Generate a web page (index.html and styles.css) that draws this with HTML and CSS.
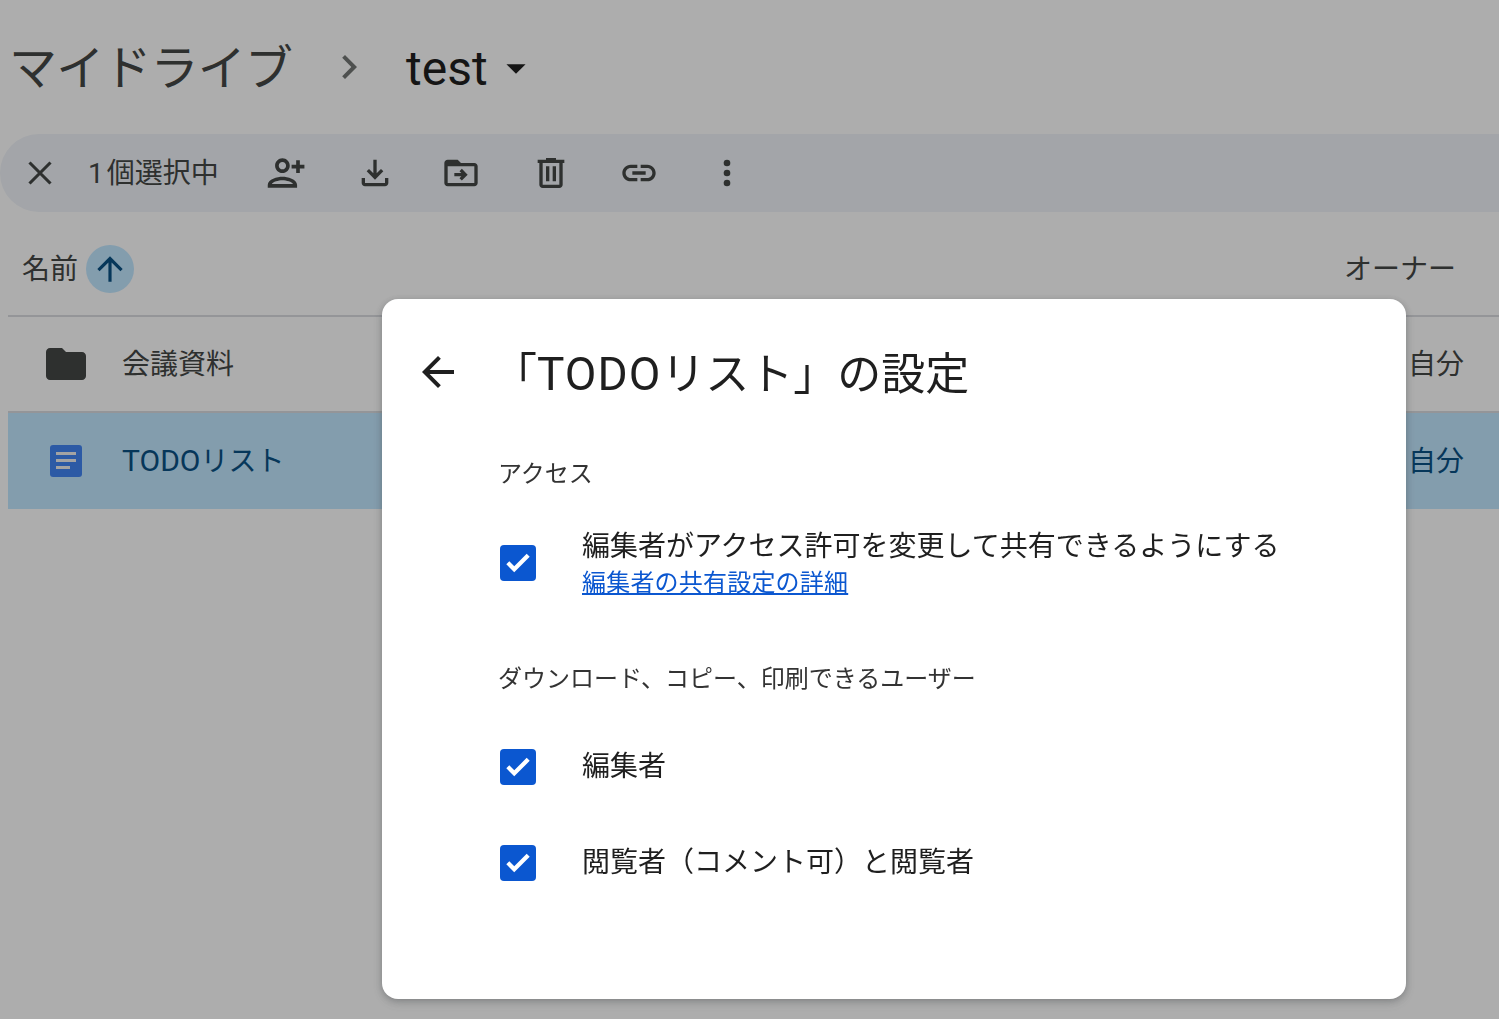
FILE: index.html
```html
<!DOCTYPE html>
<html lang="ja">
<head>
  <meta charset="UTF-8" />
  <meta name="viewport" content="width=device-width, initial-scale=1" />
  <title>TODOリストの設定</title>
  <link rel="stylesheet" href="styles.css">
</head>
<body>
  <div class="page">
    <header class="breadcrumb">
      <span class="crumb-root">マイドライブ</span>
      <svg class="crumb-sep" viewBox="0 0 24 24"><path d="M10 6L8.59 7.41 13.17 12l-4.58 4.59L10 18l6-6z"/></svg>
      <span class="crumb-current">test</span>
      <svg class="crumb-drop" viewBox="0 0 24 24"><path d="M7 10l5 5 5-5z"/></svg>
    </header>

    <div class="toolbar">
      <svg class="close-icon" viewBox="0 0 24 24"><path d="M6 6l12 12M18 6L6 18"/></svg>
      <span class="selected-count">1 個選択中</span>
      <div class="actions">
        <svg class="action action-share" viewBox="0 0 24 24"><path d="M9.500 12c2.200 0 4-1.800 4-4s-1.800-4-4-4-4 1.800-4 4 1.800 4 4 4zm0-6c1.100 0 2 .9 2 2s-.9 2-2 2-2-.9-2-2 .9-2 2-2zm0 8c-2.700 0-8 1.300-8 4.500V20h16v-1.500c0-3.200-5.300-4.500-8-4.500zm-5.800 4c.6-1.100 3.600-2 5.800-2s5.200.9 5.800 2H3.700zM19 12V9.500h2.500v-2H19V5h-2v2.500h-2.500v2H17V12z"/></svg>
        <svg class="action" viewBox="0 0 24 24"><path d="M18 15v3H6v-3H4v3c0 1.100.9 2 2 2h12c1.100 0 2-.9 2-2v-3h-2zm-1-4l-1.410-1.410L13 12.170V4h-2v8.170L8.410 9.590 7 11l5 5 5-5z"/></svg>
        <svg class="action action-move" viewBox="0 0 24 24"><path d="M20 6h-8l-2-2H4c-1.100 0-2 .9-2 2v12c0 1.100.9 2 2 2h16c1.100 0 2-.9 2-2V8c0-1.100-.9-2-2-2zm0 12H4V8h16v10z"/><path d="M12.500 9.500l-1.400 1.400 1.100 1.100H8v2h4.200l-1.100 1.100 1.400 1.400 3.500-3.500z"/></svg>
        <svg class="action" viewBox="0 0 24 24"><path d="M15 4V3H9v1H4v2h1v13c0 1.100.9 2 2 2h10c1.100 0 2-.9 2-2V6h1V4h-5zm2 15H7V6h10v13zM9 8h2v9H9zm4 0h2v9h-2z"/></svg>
        <svg class="action" viewBox="0 0 24 24"><path d="M17 7h-4v2h4c1.650 0 3 1.350 3 3s-1.350 3-3 3h-4v2h4c2.760 0 5-2.240 5-5s-2.240-5-5-5zm-6 8H7c-1.650 0-3-1.350-3-3s1.350-3 3-3h4V7H7c-2.760 0-5 2.240-5 5s2.240 5 5 5h4v-2zm-3-4h8v2H8z"/></svg>
        <svg class="action" viewBox="0 0 24 24"><circle cx="12" cy="6" r="2"/><circle cx="12" cy="12" r="2"/><circle cx="12" cy="18" r="2"/></svg>
      </div>
    </div>

    <div class="file-table">
      <div class="table-head">
        <div class="sort-name">
          <span class="cell-text">名前</span>
          <span class="sort-btn">
            <svg viewBox="0 0 24 24"><path d="M4 12l1.410 1.410L11 7.830V20h2V7.830l5.580 5.590L20 12l-8-8-8 8z"/></svg>
          </span>
        </div>
        <span class="owner-head cell-text">オーナー</span>
      </div>

      <div class="file-row">
        <svg class="file-icon" viewBox="0 0 24 24"><path class="folder" d="M10 4H4c-1.100 0-2 .9-2 2v12c0 1.100.9 2 2 2h16c1.100 0 2-.9 2-2V8c0-1.100-.9-2-2-2h-8l-2-2z"/></svg>
        <span class="file-name cell-text">会議資料</span>
        <span class="cell-text">自分</span>
      </div>

      <div class="file-row selected">
        <svg class="file-icon" viewBox="0 0 24 24">
          <rect class="doc" x="4" y="4" width="16" height="16" rx="1.500"/>
          <path class="doc-lines" d="M7 7.500h10v1.500H7zM7 11h10v1.500H7zM7 14.500h7V16H7z"/>
        </svg>
        <span class="file-name cell-text"><span class="latin">TODO</span>リスト</span>
        <span class="cell-text">自分</span>
      </div>
    </div>
  </div>

  <div class="scrim"></div>

  <div class="dialog">
    <div class="dialog-head">
      <svg class="back-icon" viewBox="0 0 24 24"><path d="M20 11H7.830l5.590-5.590L12 4l-8 8 8 8 1.410-1.410L7.830 13H20v-2z"/></svg>
      <h1>「<span class="latin-lg">TODO</span>リスト」の設定</h1>
    </div>

    <div class="dialog-body">
      <h2 class="section-title">アクセス</h2>
      <div class="option option-first">
        <span class="checkbox"><svg viewBox="0 0 24 24"><path d="M9.500 18.200l-5.300-5.300 2-2 3.300 3.300 8.300-8.300 2 2z"/></svg></span>
        <div class="option-text">
          <div>編集者がアクセス許可を変更して共有できるようにする</div>
          <a href="#" class="learn-more">編集者の共有設定の詳細</a>
        </div>
      </div>

      <h2 class="section-title section-second">ダウンロード、コピー、印刷できるユーザー</h2>
      <div class="option">
        <span class="checkbox"><svg viewBox="0 0 24 24"><path d="M9.500 18.200l-5.300-5.300 2-2 3.300 3.300 8.300-8.300 2 2z"/></svg></span>
        <div class="option-text">編集者</div>
      </div>
      <div class="option">
        <span class="checkbox"><svg viewBox="0 0 24 24"><path d="M9.500 18.200l-5.300-5.300 2-2 3.300 3.300 8.300-8.300 2 2z"/></svg></span>
        <div class="option-text">閲覧者（コメント可）と閲覧者</div>
      </div>
    </div>
  </div>
</body>
</html>
```

FILE: styles.css
```css
* {
  box-sizing: border-box;
  font-family: Roboto, 'Noto Sans CJK JP', sans-serif;
}

html, body {
  height: 100%;
}

body {
  margin: 0;
  background: #fff;
  color: #1f1f1f;
  overflow: hidden;
}

.breadcrumb {
  display: flex;
  align-items: center;
  height: 134px;
  padding-left: 9px;
}

.crumb-root {
  width: 287px;
  padding-bottom: 6px;
  font-size: 48px;
  letter-spacing: -0.8px;
  color: #444746;
  white-space: nowrap;
}

.crumb-sep {
  width: 48px;
  height: 48px;
  margin-left: 29px;
  fill: #747775;
}

.crumb-current {
  margin-left: 33px;
  padding-top: 2px;
  font-size: 48px;
  color: #1f1f1f;
}

.crumb-drop {
  width: 48px;
  height: 48px;
  margin-left: 4px;
  padding-top: 2px;
  fill: #1f1f1f;
}

.toolbar {
  display: flex;
  align-items: center;
  height: 78px;
  padding-left: 19px;
  background: #f0f4f9;
  border-radius: 39px 0 0 39px;
}

.close-icon {
  width: 42px;
  height: 42px;
  fill: none;
  stroke: #444746;
  stroke-width: 1.800;
}

.selected-count {
  margin-left: 27px;
  padding-bottom: 4px;
  font-size: 28px;
  word-spacing: -4px;
  color: #444746;
  white-space: nowrap;
}

.actions {
  display: flex;
  align-items: center;
  margin-left: 24px;
}

.action {
  width: 40px;
  height: 40px;
  margin: 0 24px;
  fill: #444746;
}

.action-share {
  width: 44px;
  height: 44px;
  margin: 0 22px;
}

.action-move {
  margin: 0 26px 0 22px;
}

.file-table {
  margin-left: 8px;
}

.table-head {
  display: flex;
  align-items: center;
  justify-content: space-between;
  height: 105px;
  padding: 10px 43px 0 14px;
  border-bottom: 2px solid #dadce0;
}

.cell-text {
  padding-bottom: 4px;
}

.sort-name {
  display: flex;
  align-items: center;
  gap: 8px;
  font-size: 28px;
  color: #444746;
}

.sort-btn {
  display: flex;
  align-items: center;
  justify-content: center;
  width: 48px;
  height: 48px;
  border-radius: 50%;
  background: #c2e7ff;
}

.sort-btn svg {
  width: 38px;
  height: 38px;
  fill: #0a5285;
}

.owner-head {
  font-size: 28px;
  color: #444746;
}

.file-row {
  display: flex;
  align-items: center;
  height: 96px;
  padding: 0 35px 0 34px;
  border-bottom: 2px solid #dadce0;
  font-size: 28px;
  color: #444746;
}

.file-row.selected {
  background: #c2e7ff;
  color: #0a5285;
  border-bottom: none;
}

.file-icon {
  width: 48px;
  height: 48px;
  flex-shrink: 0;
}

.folder {
  fill: #444746;
}

.doc {
  fill: #4285f4;
}

.doc-lines {
  fill: #f1f1f1;
}

.file-name {
  margin-left: 32px;
  flex: 1;
}

.latin {
  font-size: 30px;
  line-height: 1;
}

.latin-lg {
  font-size: 46px;
  letter-spacing: 1px;
  line-height: 1;
}

.scrim {
  position: fixed;
  inset: 0;
  background: rgba(0, 0, 0, 0.32);
}

.dialog {
  position: fixed;
  left: 382px;
  top: 299px;
  width: 1024px;
  height: 700px;
  background: #fff;
  border-radius: 16px;
  box-shadow: 0 2px 6px rgba(60, 64, 67, 0.3), 0 4px 12px rgba(60, 64, 67, 0.15);
}

.dialog-head {
  display: flex;
  align-items: center;
  height: 148px;
  padding-left: 32px;
}

.back-icon {
  width: 48px;
  height: 48px;
  margin-bottom: 2px;
  fill: #1f1f1f;
  flex-shrink: 0;
}

.dialog-head h1 {
  margin: 0 0 0 31px;
  padding-bottom: 4px;
  font-size: 44px;
  font-weight: 400;
  color: #1f1f1f;
  white-space: nowrap;
}

.dialog-body {
  padding-left: 116px;
}

.section-title {
  margin: 0;
  font-size: 24px;
  font-weight: 400;
  line-height: 54px;
  color: #333;
}

.section-second {
  margin: 25px 0 13px;
}

.option {
  display: flex;
  align-items: center;
  min-height: 96px;
  padding-left: 2px;
  font-size: 28px;
  color: #1f1f1f;
}

.option-first {
  min-height: 126px;
}

.option-first .checkbox {
  margin-bottom: 2px;
}

.checkbox {
  display: flex;
  align-items: center;
  justify-content: center;
  width: 36px;
  height: 36px;
  border-radius: 4px;
  background: #0b57d0;
  flex-shrink: 0;
}

.checkbox svg {
  width: 36px;
  height: 36px;
  fill: #fff;
}

.option-text {
  margin-left: 46px;
  line-height: 38px;
}

.learn-more {
  display: block;
  font-size: 24px;
  letter-spacing: 0.2px;
  line-height: 34px;
  color: #0b57d0;
}
```
